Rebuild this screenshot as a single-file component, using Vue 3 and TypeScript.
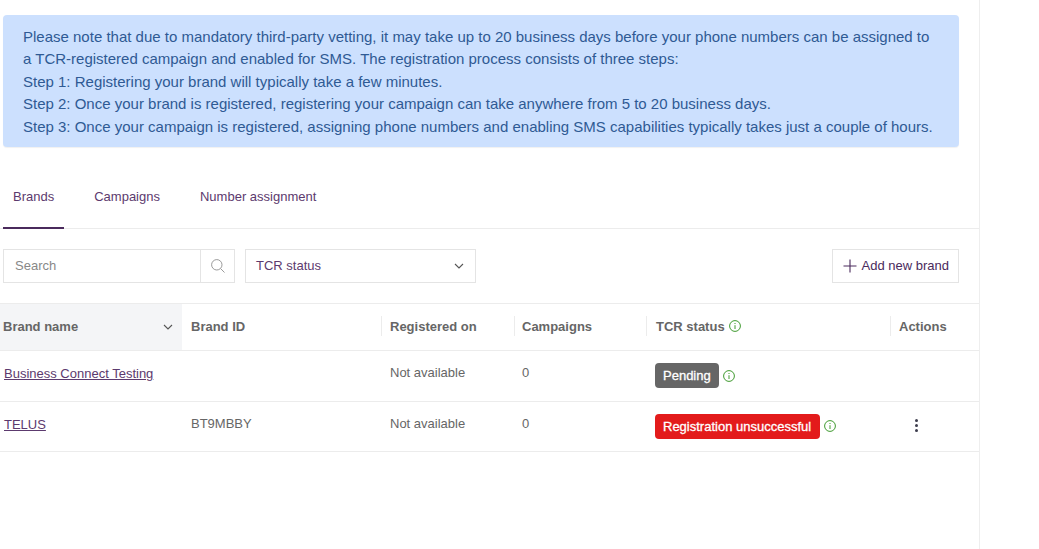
<script setup lang="ts">
interface Row {
  name: string
  id: string
  status: string
  tone: string
  menu: boolean
}
const steps: string[] = [
  'Please note that due to mandatory third-party vetting, it may take up to 20 business days before your phone numbers can be assigned to a TCR-registered campaign and enabled for SMS. The registration process consists of three steps:',
  'Step 1: Registering your brand will typically take a few minutes.',
  'Step 2: Once your brand is registered, registering your campaign can take anywhere from 5 to 20 business days.',
  'Step 3: Once your campaign is registered, assigning phone numbers and enabling SMS capabilities typically takes just a couple of hours.',
]
const rows: Row[] = [
  { name: 'Business Connect Testing', id: '', status: 'Pending', tone: 'grey', menu: false },
  { name: 'TELUS', id: 'BT9MBBY', status: 'Registration unsuccessful', tone: 'red', menu: true },
]
</script>

<template>
  <div class="page">
    <main class="main">
      <div class="alert">
        <p v-for="s in steps" :key="s">{{ s }}</p>
      </div>
      <nav class="tabs">
        <a class="tab active">Brands</a>
        <a class="tab">Campaigns</a>
        <a class="tab">Number assignment</a>
      </nav>
      <div class="toolbar">
        <div class="search">
          <span class="placeholder">Search</span>
          <span class="search-btn">
            <svg width="16" height="16" viewBox="0 0 16 16" fill="none" stroke="#9a9a9a" stroke-width="1">
              <circle cx="6.8" cy="6.8" r="5.2" />
              <path d="M10.6 10.6 14.5 14.5" />
            </svg>
          </span>
        </div>
        <div class="select">
          <span class="lift">TCR status</span>
          <svg width="10" height="6" viewBox="0 0 10 6" fill="none" stroke="#555" stroke-width="1.1">
            <path d="M1 1 5 5 9 1" />
          </svg>
        </div>
        <button class="add">
          <svg width="14" height="14" viewBox="0 0 14 14" fill="none" stroke="#4a2a5c" stroke-width="1.1">
            <path d="M7 0.5V13.5M0.5 7H13.5" />
          </svg>
          <span class="lift">Add new brand</span>
        </button>
      </div>
      <div class="table">
        <div class="row head">
          <div class="cell sorted">
            <span>Brand name</span>
            <svg class="sort-icon" width="10" height="6" viewBox="0 0 10 6" fill="none" stroke="#555" stroke-width="1.1">
              <path d="M1 1 5 5 9 1" />
            </svg>
          </div>
          <div class="cell"><span>Brand ID</span></div>
          <div class="cell sep"><span>Registered on</span></div>
          <div class="cell sep"><span>Campaigns</span></div>
          <div class="cell sep">
            <span>TCR status</span>
            <svg class="info" width="12" height="12" viewBox="0 0 12 12" fill="none" stroke="#3f9a2f" stroke-width="1">
              <circle cx="6" cy="6" r="5.4" />
              <path d="M6 5.2V9M6 3V4" />
            </svg>
          </div>
          <div class="cell sep"><span>Actions</span></div>
        </div>
        <div v-for="r in rows" :key="r.name" class="row body">
          <div class="cell text first"><a class="link">{{ r.name }}</a></div>
          <div class="cell text">{{ r.id }}</div>
          <div class="cell text">Not available</div>
          <div class="cell text">0</div>
          <div class="cell status">
            <span class="badge" :class="r.tone">{{ r.status }}</span>
            <svg class="info" width="12" height="12" viewBox="0 0 12 12" fill="none" stroke="#3f9a2f" stroke-width="1">
              <circle cx="6" cy="6" r="5.4" />
              <path d="M6 5.2V9M6 3V4" />
            </svg>
          </div>
          <div class="cell actions">
            <span v-if="r.menu" class="dots"><i></i><i></i><i></i></span>
          </div>
        </div>
      </div>
    </main>
  </div>
</template>

<style>
html,
body {
  margin: 0;
  background: #fff;
}
</style>

<style scoped>
.page {
  width: 1039px;
  height: 549px;
  overflow: hidden;
  font-family: "Liberation Sans", Arial, sans-serif;
  font-size: 13px;
  color: #666;
}
.main {
  width: 980px;
  height: 549px;
  box-sizing: border-box;
  border-right: 1px solid #eee;
  padding-top: 15px;
}
.alert {
  margin: 0 20px 0 3px;
  height: 132px;
  box-sizing: border-box;
  padding: 10.9px 20px 0;
  background: #cce0fe;
  border-radius: 4px;
  box-shadow: 0 1px 1px rgba(0, 0, 0, 0.06);
  font-size: 15px;
  line-height: 22.5px;
  color: #2f5a94;
}
.alert p {
  margin: 0;
}
.tabs {
  display: flex;
  height: 81px;
  margin-top: 1px;
  border-bottom: 1px solid #ececec;
  padding-left: 3px;
  box-sizing: border-box;
}
.tab {
  display: flex;
  align-items: center;
  height: 81px;
  box-sizing: border-box;
  padding: 17px 10px 0;
  margin-right: 20px;
  border-bottom: 2px solid transparent;
  color: #5c3a6e;
}
.tab.active {
  border-bottom-color: #4a2a5c;
}
.toolbar {
  display: flex;
  align-items: center;
  height: 34px;
  margin-top: 20px;
  padding: 0 20px 0 3px;
}
.lift {
  margin-bottom: 2px;
}
.search {
  display: flex;
  width: 232px;
  height: 34px;
  box-sizing: border-box;
  border: 1px solid #e4e4e4;
}
.placeholder {
  flex: 1;
  padding-left: 11px;
  line-height: 32px;
  color: #888;
}
.search-btn {
  width: 33px;
  display: flex;
  align-items: center;
  justify-content: center;
  border-left: 1px solid #e4e4e4;
}
.select {
  display: flex;
  align-items: center;
  justify-content: space-between;
  width: 231px;
  height: 34px;
  box-sizing: border-box;
  margin-left: 10px;
  padding: 0 11px 0 10px;
  border: 1px solid #e4e4e4;
  color: #5c3a6e;
}
.add {
  display: flex;
  align-items: center;
  gap: 5px;
  height: 34px;
  box-sizing: border-box;
  margin-left: auto;
  padding: 0 9px 0 10px;
  background: #fff;
  border: 1px solid #e4e4e4;
  color: #4a2a5c;
  font: inherit;
}
.table {
  margin-top: 20px;
  width: 979px;
}
.row {
  display: grid;
  grid-template-columns: 182px 199px 133px 132px 244px 89px;
  border-top: 1px solid #ececec;
}
.head {
  height: 46px;
  font-weight: 700;
}
.head .cell {
  padding-bottom: 2px;
}
.body {
  height: 50px;
}
.body:last-child {
  height: 49px;
  border-bottom: 1px solid #ececec;
}
.cell {
  display: flex;
  align-items: center;
  box-sizing: border-box;
  padding-left: 9px;
}
.cell:nth-child(4) {
  padding-left: 8px;
}
.head .cell:nth-child(5) {
  padding-left: 10px;
}
.text {
  padding-bottom: 7px;
}
.status {
  padding-bottom: 1px;
}
.head .cell:first-child {
  padding-left: 3px;
}
.sorted {
  justify-content: space-between;
  padding-right: 9px;
  background: #f4f5f7;
}
.sort-icon {
  margin-top: 2px;
}
.sep {
  position: relative;
}
.sep::before {
  content: "";
  position: absolute;
  left: 0;
  top: 12px;
  bottom: 14px;
  width: 1px;
  background: #ececec;
}
.cell.first {
  padding-left: 4px;
  padding-bottom: 5px;
}
.link {
  color: #5c3a6e;
  text-decoration: underline;
}
.info {
  margin-left: 4px;
}
.badge {
  display: inline-flex;
  align-items: center;
  height: 25px;
  padding: 0 8px;
  border-radius: 4px;
  color: #fff;
  -webkit-text-stroke: 0.3px #fff;
}
.grey {
  background: #666;
}
.red {
  padding-right: 9px;
  background: #e31b1b;
}
.cell.actions {
  padding-left: 25px;
  padding-bottom: 3px;
}
.dots {
  display: flex;
  flex-direction: column;
  gap: 2px;
}
.dots i {
  display: block;
  width: 3px;
  height: 3px;
  border-radius: 50%;
  background: #3d3d4d;
}
</style>
